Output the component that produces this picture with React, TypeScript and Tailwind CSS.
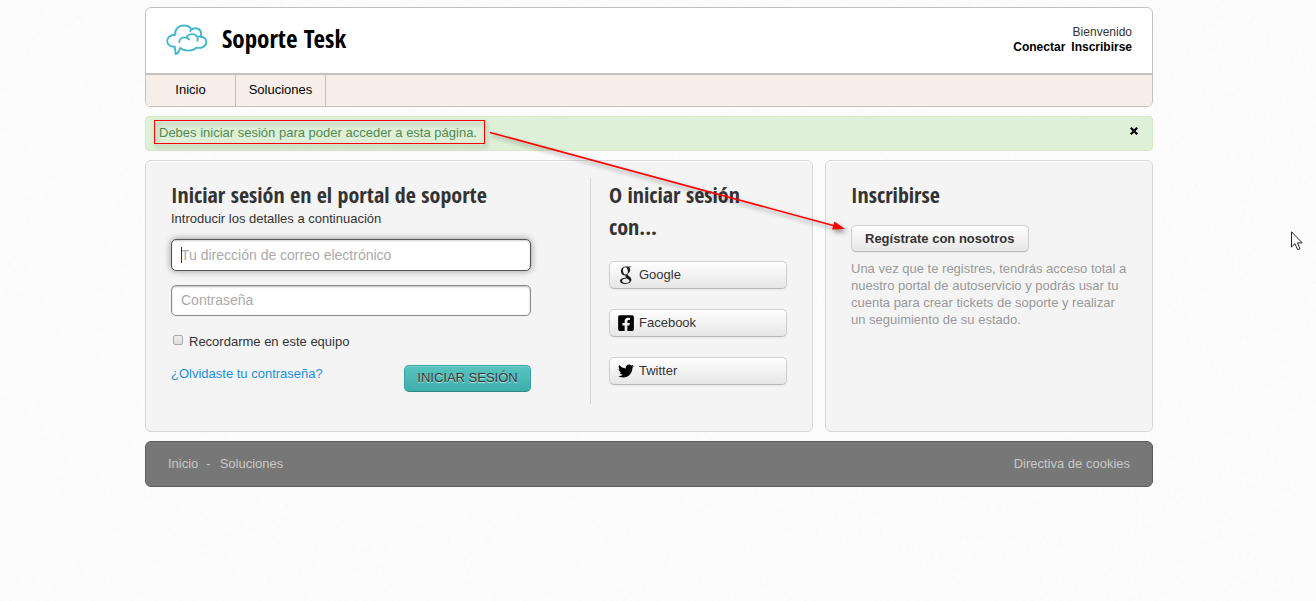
import React from "react";
import { FaFacebookSquare, FaTwitter } from "react-icons/fa";

const heading =
  "font-['Open_Sans_Condensed','Noto_Sans_Condensed','Liberation_Sans_Narrow','DejaVu_Sans_Condensed',sans-serif] font-bold";

const softButton =
  "rounded-[5px] border border-[#cfcfcf] border-b-[#b8b8b8] bg-linear-to-b from-white to-[#e6e6e6] text-[#333] shadow-[0_1px_2px_rgba(0,0,0,0.05)]";

const panel = "rounded-md border border-[#d8d8d8] bg-[#f4f4f4] shadow-[inset_0_1px_0_#fff]";

function PaperTexture() {
  return (
    <svg className="absolute inset-0 -z-10 h-full w-full opacity-[0.04]" aria-hidden="true">
      <filter id="paper">
        <feTurbulence type="fractalNoise" baseFrequency="0.25" numOctaves="3" stitchTiles="stitch" />
        <feColorMatrix type="saturate" values="0" />
      </filter>
      <rect width="100%" height="100%" filter="url(#paper)" />
    </svg>
  );
}

function CloudLogo() {
  return (
    <svg
      className="h-8 w-[42px]"
      viewBox="0 0 42 32"
      fill="none"
      stroke="#44b8cc"
      strokeWidth="1.900"
      strokeLinecap="round"
      strokeLinejoin="round"
      aria-hidden="true"
    >
      <path d="M9.200 10.800C4.500 10.800 1.200 13.500 1.200 17c0 3.500 3 5.800 7.600 5.700l.9 7.400c2.200-.6 3.800-3 4.300-6.100 4.500 3.500 12.500 3.600 16.500-.4 5 1.200 9.800-1.400 9.800-5.600 0-3-2-4.800-4.900-5.200" />
      <path d="M9.200 10.800C8.500 5.500 12.500 1.500 17.800 1.500c3.400 0 6.200 1.300 7.800 4 3.600-2.600 8.700-1 9.400 3 .3 1.500.1 2.800-.5 4.200" />
      <path d="M13.300 18c.2-3.800 3.400-5.400 7.200-4.200 1.300-4.400 8.400-5 10.700-1 .8 1.400.7 2.800.1 4M20.500 13.800c1.300.3 2.200.9 2.800 1.700M31.200 12.900c1.200-.6 2.900-.7 4.200-.1M25.600 5.500c-.7.500-1.100 1-1.400 1.700" />
    </svg>
  );
}

function GoogleIcon() {
  return (
    <svg className="h-[18px] w-4 shrink-0" viewBox="0 0 16 18" fill="#1c1c1c" fillRule="evenodd" aria-hidden="true">
      <path d="M13.800.5H8.300C5 .5 2.900 2.600 2.900 5.200c0 2.600 1.900 4.400 4.700 4.400-.5 1 .1 1.600.7 2.200C4.500 11.900 2 13 2 15c0 1.900 2.300 2.900 5.200 2.900 3.900 0 6.200-1.800 6.200-4.100 0-1.600-.9-2.500-2.200-3.500-1-.8-1.600-1.200-1.600-1.800 0-.6.500-1 1.100-1.500.9-.7 1.500-1.700 1.500-3 0-1.100-.4-2-1.100-2.700h1.400zM7.200 1.300c1.600 0 2.700 2.100 2.700 4.300 0 1.900-.9 3-2.200 3-1.700 0-2.800-2.100-2.800-4.300 0-1.800.9-3 2.300-3zM8.900 12.400c1.800 1.100 2.600 1.600 2.600 2.700 0 1.200-1.300 2-3.500 2s-4-.9-4-2.300c0-1.600 2-2.500 4.900-2.400z" />
    </svg>
  );
}

function Annotation() {
  return (
    <svg
      className="pointer-events-none absolute -top-px -left-px h-[140px] w-[710px] overflow-visible drop-shadow-[2px_3px_2px_rgba(0,0,0,0.4)]"
      viewBox="0 0 710 140"
      aria-hidden="true"
    >
      <rect x="9.500" y="4.500" width="330" height="23" fill="none" stroke="#f00" />
      <path d="M345 16.500L690 110" stroke="#f00" strokeWidth="1.600" />
      <path d="M700 113L687 113.500L689.500 105.500Z" fill="#f00" />
    </svg>
  );
}

function SocialButton({ icon, label }: { icon: React.ReactNode; label: string }) {
  return (
    <button type="button" className={`flex h-7 w-full items-center gap-1 pb-px pl-2 text-left ${softButton}`}>
      <span className="flex w-4 justify-center text-black">{icon}</span>
      <span className="pb-px pl-px">{label}</span>
    </button>
  );
}

export default function App() {
  return (
    <div className="relative isolate min-h-screen bg-[#fdfdfd] pt-[7px] pr-[18px] pb-10 font-['Liberation_Sans',Arial,sans-serif] text-[13px] leading-[17px] text-[#333]">
      <PaperTexture />
      <div className="mx-auto max-w-[1008px]">
        <header className="overflow-hidden rounded-md border border-[#c5c0bc] bg-white">
          <div className="flex h-[65px] items-center justify-between px-5 pb-[2px]">
            <a href="#" className="flex items-center gap-[14px] text-black">
              <CloudLogo />
              <h1 className={`pb-[3px] text-[25px] leading-8 ${heading}`}>Soporte Tesk</h1>
            </a>
            <div className="text-right text-[12px] leading-[15px] text-black">
              <p className="text-[#333]">Bienvenido</p>
              <p className="flex gap-[6px] font-bold">
                <a href="#">Conectar</a>
                <a href="#">Inscribirse</a>
              </p>
            </div>
          </div>
          <nav className="flex h-[33px] border-t-2 border-[#c5c0bc] bg-[#f6efe9] leading-[30px] text-black">
            <a href="#" className="w-[90px] border-r border-[#c5c0bc] text-center">Inicio</a>
            <a href="#" className="w-[90px] border-r border-[#c5c0bc] text-center">Soluciones</a>
          </nav>
        </header>

        <div className="relative z-10 mt-[9px] flex h-[35px] items-center justify-between rounded border border-[#d6e9c6] bg-[#dff0d8] pr-[10px] pb-[2px] pl-[13px] text-[#4f8a52]">
          <p>Debes iniciar sesión para poder acceder a esta página.</p>
          <button type="button" aria-label="Cerrar" className="p-1 pb-2 text-black">
            <svg className="size-2" viewBox="0 0 8 8" stroke="currentColor" strokeWidth="2.200" aria-hidden="true">
              <path d="M.8.8l6.400 6.400M7.200.8L.8 7.200" />
            </svg>
          </button>
          <Annotation />
        </div>

        <main className="mt-[9px] grid grid-cols-[668fr_328fr] gap-3">
          <section className={`flex min-h-[272px] px-[25px] pt-[17px] pb-[27px] ${panel}`}>
            <form className="w-[360px]" onSubmit={(e) => e.preventDefault()}>
              <h2 className={`text-[22px] leading-8 ${heading}`}>Iniciar sesión en el portal de soporte</h2>
              <p>Introducir los detalles a continuación</p>
              <div className="relative mt-3">
                <input
                  type="email"
                  aria-label="Tu dirección de correo electrónico"
                  placeholder="Tu dirección de correo electrónico"
                  className="block h-8 w-full rounded-[5px] border border-[#555] bg-white px-[9px] text-sm shadow-[0_0_7px_rgba(0,0,0,0.4),inset_0_1px_2px_rgba(0,0,0,0.2)] outline-none placeholder:text-[#aaa]"
                />
                <span className="absolute top-2 left-[10px] h-4 w-px bg-[#333]" />
              </div>
              <input
                type="password"
                aria-label="Contraseña"
                placeholder="Contraseña"
                className="mt-[14px] block h-[31px] w-full rounded-[5px] border border-[#888] bg-white px-[9px] pb-[2px] text-sm shadow-[inset_0_1px_2px_rgba(0,0,0,0.25)] outline-none placeholder:text-[#aaa]"
              />
              <label className="mt-[17px] flex items-center gap-[6px] pl-[2px]">
                <input
                  type="checkbox"
                  className="mb-[3px] size-[10px] appearance-none rounded-xs border border-[#aaa] bg-linear-to-b from-[#eee] to-[#ddd] checked:bg-[#3fb0ac]"
                />
                Recordarme en este equipo
              </label>
              <div className="mt-[15px] flex items-start justify-between">
                <a href="#" className="text-[#1a90dd]">¿Olvidaste tu contraseña?</a>
                <button
                  type="submit"
                  className="h-[27px] w-[127px] rounded-[5px] border border-[#3aa39f] border-b-[#2f8683] bg-linear-to-b from-[#58c5c1] to-[#3eaeab] pb-[3px] text-[#333] shadow-[inset_0_1px_0_rgba(255,255,255,0.2)] text-shadow-[0_1px_1px_rgba(255,255,255,0.7)]"
                >
                  INICIAR SESIÓN
                </button>
              </div>
            </form>
            <div className="ml-[59px] flex-1 border-l border-[#d4d4d4] pl-[18px]">
              <h2 className={`text-[22px] leading-8 ${heading}`}>O iniciar sesión con...</h2>
              <div className="mt-[19px] flex flex-col gap-5">
                <SocialButton icon={<GoogleIcon />} label="Google" />
                <SocialButton icon={<FaFacebookSquare className="size-[18px] shrink-0" />} label="Facebook" />
                <SocialButton icon={<FaTwitter className="size-4" />} label="Twitter" />
              </div>
            </div>
          </section>

          <section className={`px-[25px] pt-[17px] ${panel}`}>
            <h2 className={`text-[22px] leading-8 ${heading}`}>Inscribirse</h2>
            <button type="button" className={`mt-[15px] h-[27px] px-[13px] font-bold ${softButton}`}>
              Regístrate con nosotros
            </button>
            <p className="mt-2 text-[#999]">
              Una vez que te registres, tendrás acceso total a nuestro portal de autoservicio y podrás usar tu cuenta
              para crear tickets de soporte y realizar un seguimiento de su estado.
            </p>
          </section>
        </main>

        <footer className="mt-[9px] flex h-[46px] items-center justify-between rounded-md border border-[#5c5c5c] bg-[#777] px-[22px] pb-[2px] text-[#c8c8c8]">
          <div className="flex gap-2">
            <a href="#">Inicio</a>
            <span>-</span>
            <a href="#" className="pl-px">Soluciones</a>
          </div>
          <a href="#">Directiva de cookies</a>
        </footer>
      </div>

      <svg className="absolute top-[231px] right-[13px] h-5 w-3" viewBox="0 0 12 20" aria-hidden="true">
        <path d="M.5.8v15.200l3.500-3.300 2.600 6 2.400-1-2.600-5.800h4.800z" fill="#fff" stroke="#223" />
      </svg>
    </div>
  );
}
